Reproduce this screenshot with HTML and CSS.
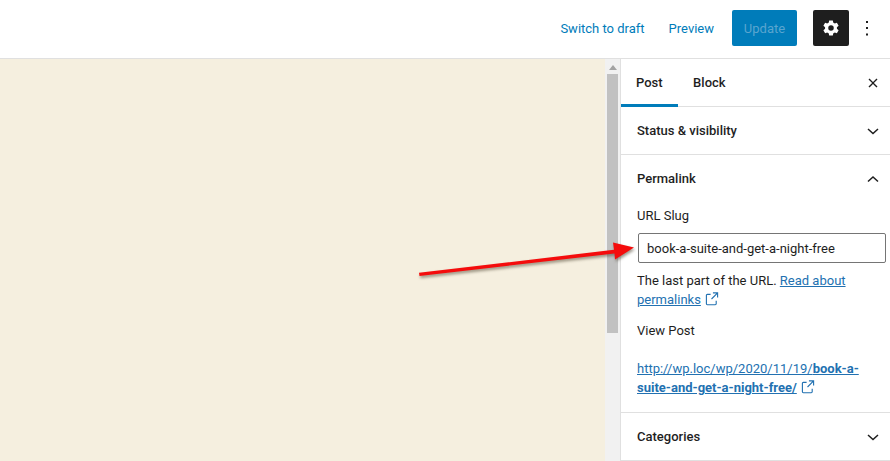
FILE: index.html
```html
<!DOCTYPE html>
<html lang="en">
<head>
<meta charset="utf-8">
<title>Edit Post</title>
<link rel="stylesheet" href="styles.css">
</head>
<body>
<div class="app">
  <header class="topbar">
    <a class="top-link link-draft">Switch to draft</a>
    <a class="top-link link-preview">Preview</a>
    <button class="update">Update</button>
    <button class="settings" aria-label="Settings">
      <svg width="22" height="22" viewBox="0 0 24 24"><path fill="#fff" fill-rule="evenodd" d="M18.5 12c0-.3 0-.6-.1-.9l1.900-1.600-1.900-3.200-2.300.8c-.5-.4-1-.7-1.600-.9L14 3.800h-4l-.5 2.400c-.6.2-1.100.5-1.600.9l-2.300-.8-1.900 3.200 1.900 1.600c-.1.3-.1.6-.1.9s0 .6.100.9l-1.900 1.600 1.900 3.200 2.300-.8c.5.4 1 .7 1.600.9l.5 2.400h4l.5-2.400c.6-.2 1.100-.5 1.600-.9l2.300.8 1.900-3.200-1.900-1.600c.1-.3.1-.6.1-.9zM12 15a3 3 0 1 1 0-6 3 3 0 0 1 0 6z"/></svg>
    </button>
    <button class="more" aria-label="Options">
      <svg width="24" height="24" viewBox="0 0 24 24"><path fill="#1e1e1e" d="M11 5h2v2h-2zM11 11h2v2h-2zM11 17.500h2v2h-2z"/></svg>
    </button>
  </header>
  <div class="workspace">
    <main class="canvas"></main>
    <div class="scrollbar">
      <svg class="scroll-arrow" width="8" height="5" viewBox="0 0 8 5"><path fill="#a3a3a3" d="M4 0l4 5H0z"/></svg>
      <div class="scroll-thumb"></div>
    </div>
    <aside class="sidebar">
      <div class="tabs">
        <div class="tab tab-active">Post</div>
        <div class="tab tab-block">Block</div>
        <svg class="close" width="24" height="24" viewBox="0 0 24 24"><path fill="#1e1e1e" d="M12.900 12l3.600-3.600-1-1-3.500 3.700-3.500-3.700-1 1 3.600 3.600-3.600 3.600 1 1 3.500-3.700 3.500 3.700 1-1z"/></svg>
      </div>
      <section class="panel">
        <div class="panel-head"><span>Status &amp; visibility</span>
          <svg class="chev" width="24" height="24" viewBox="0 0 24 24"><path fill="none" stroke="#1e1e1e" stroke-width="1.500" d="M7 10l5 4.500 5-4.500"/></svg>
        </div>
      </section>
      <section class="panel panel-open">
        <div class="panel-head"><span>Permalink</span>
          <svg class="chev" width="24" height="24" viewBox="0 0 24 24"><path fill="none" stroke="#1e1e1e" stroke-width="1.500" d="M7 14.500l5-4.500 5 4.500"/></svg>
        </div>
        <div class="panel-body">
          <label class="field-label">URL Slug</label>
          <input class="slug" type="text" value="book-a-suite-and-get-a-night-free">
          <p class="help">The last part of the URL. <a>Read about permalinks</a><svg class="ext" width="14" height="14" viewBox="0 0 15 15"><path fill="none" stroke="#2271b1" stroke-width="1.200" d="M6 2.600H2.500a1 1 0 0 0-1 1v9a1 1 0 0 0 1 1h8.500a1 1 0 0 0 1-1V9.500M8.500 1h5v5M13.500 1L7 7.500"/></svg></p>
          <div class="view-label">View Post</div>
          <p class="view-link"><a>http://wp.loc/wp/2020/11/19/<b>book-a-suite-and-get-a-night-free/</b></a><svg class="ext" width="14" height="14" viewBox="0 0 15 15"><path fill="none" stroke="#2271b1" stroke-width="1.200" d="M6 2.600H2.500a1 1 0 0 0-1 1v9a1 1 0 0 0 1 1h8.500a1 1 0 0 0 1-1V9.500M8.500 1h5v5M13.500 1L7 7.500"/></svg></p>
        </div>
      </section>
      <section class="panel">
        <div class="panel-head"><span>Categories</span>
          <svg class="chev" width="24" height="24" viewBox="0 0 24 24"><path fill="none" stroke="#1e1e1e" stroke-width="1.500" d="M7 10l5 4.500 5-4.500"/></svg>
        </div>
      </section>
    </aside>
  </div>
  <svg class="arrow" width="230" height="60" viewBox="0 0 230 60">
    <path fill="#f40c0c" d="M9 42.800L204 19.800 203 12.500 224 17.500 205 29.500 204.500 23.500 9.500 46z"/>
  </svg>
</div>
</body>
</html>
```
FILE: styles.css
```css
* { box-sizing: border-box; }
html, body { margin: 0; height: 100%; overflow: hidden; }
body { font-family: Roboto, "Noto Sans", sans-serif; font-size: 13px; color: #1e1e1e; background: #fff; }
.app { position: relative; display: flex; flex-direction: column; width: 890px; height: 461px; overflow: hidden; }

.topbar { flex: none; height: 59px; display: flex; align-items: center; background: #fff; border-bottom: 1px solid #e0e0e0; padding: 0 11px 2px 0; justify-content: flex-end; }
.top-link { color: #007cba; font-size: 13px; }
.link-preview { margin-left: 24px; }
.update { margin-left: 18px; width: 65px; height: 36px; border: 0; border-radius: 2px; background: #007cba; color: #5aa5cf; font: 13px Roboto, sans-serif; padding: 0; }
.settings { margin-left: 16px; width: 36px; height: 36px; border: 0; border-radius: 2px; background: #1e1e1e; padding: 0; display: flex; align-items: center; justify-content: center; }
.more { margin-left: 6px; width: 24px; height: 36px; border: 0; background: none; padding: 0; display: flex; align-items: center; justify-content: center; }

.workspace { flex: 1; display: flex; min-height: 0; }
.canvas { flex: 1; background: #f5efdf; }
.scrollbar { flex: none; width: 15px; background: #f1f1f1; display: flex; flex-direction: column; align-items: center; padding-top: 6px; }
.scroll-arrow { flex: none; }
.scroll-thumb { width: 11px; height: 259px; margin-top: 4px; background: #c1c1c1; }

.sidebar { flex: none; width: 270px; border-left: 1px solid #e0e0e0; background: #fff; overflow: hidden; }
.tabs { height: 48px; display: flex; align-items: stretch; border-bottom: 1px solid #e0e0e0; position: relative; }
.tab { display: flex; align-items: center; padding: 0 15px 1px; font-weight: 500; font-size: 13px; height: 48px; }
.tab-active { box-shadow: inset 0 -3px 0 #007cba; }
.tab-block { padding-left: 15.500px; }
.close { position: absolute; right: 5px; top: 12px; }

.panel { border-bottom: 1px solid #e0e0e0; }
.panel-head { height: 47px; display: flex; align-items: center; justify-content: space-between; padding: 0 5px 0 16px; font-weight: 500; }
.panel-body { padding: 5px 3px 0 16px; height: 210px; }
.field-label { display: block; line-height: 18px; }
.slug { display: block; margin: 8px 0 0 1px; width: 248px; height: 30px; border: 1px solid #757575; border-radius: 2px; padding: 0 8px; font: 13px Roboto, sans-serif; color: #1e1e1e; }
.help { margin: 8px 0 0; line-height: 19px; width: 225px; }
.help a, .view-link a { color: #2271b1; text-decoration: underline; }
.ext { vertical-align: -2px; margin-left: 4px; }
.view-label { margin-top: 13px; line-height: 18px; }
.view-link { margin: 19px 0 0; line-height: 19px; width: 228px; }

.arrow { position: absolute; left: 410px; top: 230px; filter: drop-shadow(1px 2px 1.500px rgba(70, 60, 40, .55)); }
```
